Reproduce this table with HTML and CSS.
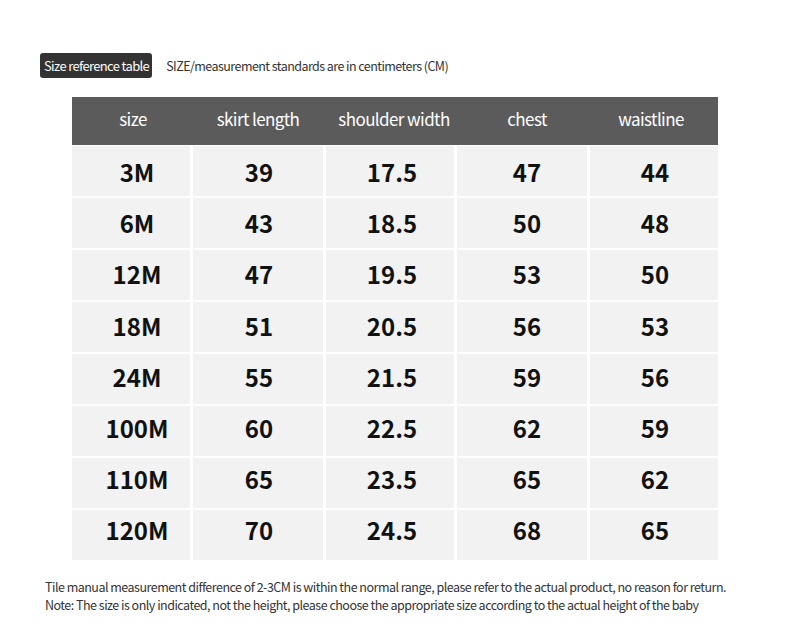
FILE: index.html
```html
<!DOCTYPE html>
<html>
<head>
<meta charset="utf-8">
<link rel="stylesheet" href="styles.css">
</head>
<body>
<div class="page">
  <div class="title-row">
    <span class="badge">Size reference table</span>
    <span class="subtitle">SIZE/measurement standards are in centimeters (CM)</span>
  </div>
  <div class="table">
    <div class="head">
      <div class="c1">size</div><div class="c2">skirt length</div><div class="c3">shoulder width</div><div class="c4">chest</div><div class="c5">waistline</div>
    </div>
    <div class="body">
      <div class="row r1"><div class="c1">3M</div><div class="c2">39</div><div class="c3">17.5</div><div class="c4">47</div><div class="c5">44</div></div>
      <div class="row r2"><div class="c1">6M</div><div class="c2">43</div><div class="c3">18.5</div><div class="c4">50</div><div class="c5">48</div></div>
      <div class="row r3"><div class="c1">12M</div><div class="c2">47</div><div class="c3">19.5</div><div class="c4">53</div><div class="c5">50</div></div>
      <div class="row r4"><div class="c1">18M</div><div class="c2">51</div><div class="c3">20.5</div><div class="c4">56</div><div class="c5">53</div></div>
      <div class="row r5"><div class="c1">24M</div><div class="c2">55</div><div class="c3">21.5</div><div class="c4">59</div><div class="c5">56</div></div>
      <div class="row r6"><div class="c1">100M</div><div class="c2">60</div><div class="c3">22.5</div><div class="c4">62</div><div class="c5">59</div></div>
      <div class="row r7"><div class="c1">110M</div><div class="c2">65</div><div class="c3">23.5</div><div class="c4">65</div><div class="c5">62</div></div>
      <div class="row r8"><div class="c1">120M</div><div class="c2">70</div><div class="c3">24.5</div><div class="c4">68</div><div class="c5">65</div></div>
    </div>
  </div>
  <div class="notes">
    <p>Tile manual measurement difference of 2-3CM is within the normal range, please refer to the actual product, no reason for return.</p>
    <p>Note: The size is only indicated, not the height, please choose the appropriate size according to the actual height of the baby</p>
  </div>
</div>
</body>
</html>
```

FILE: styles.css
```css
html, body {
  margin: 0;
  padding: 0;
  background: #ffffff;
}
.page {
  width: 790px;
  height: 635px;
  padding: 53px 0 0 40px;
  box-sizing: border-box;
  font-family: "Noto Sans CJK SC", "Noto Sans", sans-serif;
  color: #222;
}
.title-row {
  display: flex;
  align-items: center;
  gap: 14px;
  height: 25px;
}
.badge {
  display: flex;
  align-items: center;
  height: 25px;
  padding: 0 3px 0 4px;
  background: #333333;
  color: #fff;
  border-radius: 3px;
  font-size: 13px;
  letter-spacing: -0.65px;
  box-sizing: border-box;
}
.subtitle {
  font-size: 12.5px;
  letter-spacing: -0.55px;
  color: #333;
}
.table {
  margin: 19px 0 0 32px;
  width: 646px;
}
.head, .body {
  display: grid;
  grid-template-columns: 118px 130px 128px 130px 128px;
  column-gap: 3px;
}
.row {
  display: contents;
}
.head {
  background: #5b5b5b;
  height: 48px;
  color: #fff;
  font-size: 17px;
  letter-spacing: -0.6px;
  margin-bottom: 1px;
}
.head div {
  display: flex;
  align-items: center;
  justify-content: center;
  padding-bottom: 5px;
}
.head .c1 { padding-left: 4px; }
.head .c3 { padding-left: 8px; }
.head .c4 { padding-left: 10px; }
.head .c5 { padding-right: 6px; }
.body {
  row-gap: 2px;
  grid-auto-rows: 50px;
}
.body .row div {
  background: #f2f2f2;
  display: flex;
  align-items: center;
  justify-content: center;
  font-size: 24px;
  font-weight: 700;
  color: #111;
}
.body .row .c1 { padding-left: 12px; }
.body .row .c2 { padding-left: 2px; }
.body .row .c3 { padding-left: 4px; }
.body .row .c4 { padding-left: 10px; }
.body .row .c5 { padding-left: 2px; }
.r1 div { padding-bottom: 0; }
.r2 div { padding-bottom: 2px; }
.r3 div { padding-bottom: 4px; }
.r4 div { padding-bottom: 4px; }
.r5 div { padding-bottom: 6px; }
.r6 div { padding-bottom: 8px; }
.r7 div { padding-bottom: 10px; }
.r8 div { padding-bottom: 12px; }
.notes {
  margin: 18px 0 0 5px;
  font-size: 12.5px;
  letter-spacing: -0.51px;
  color: #333;
  line-height: 18px;
}
.notes p {
  margin: 0;
  white-space: nowrap;
}
```
